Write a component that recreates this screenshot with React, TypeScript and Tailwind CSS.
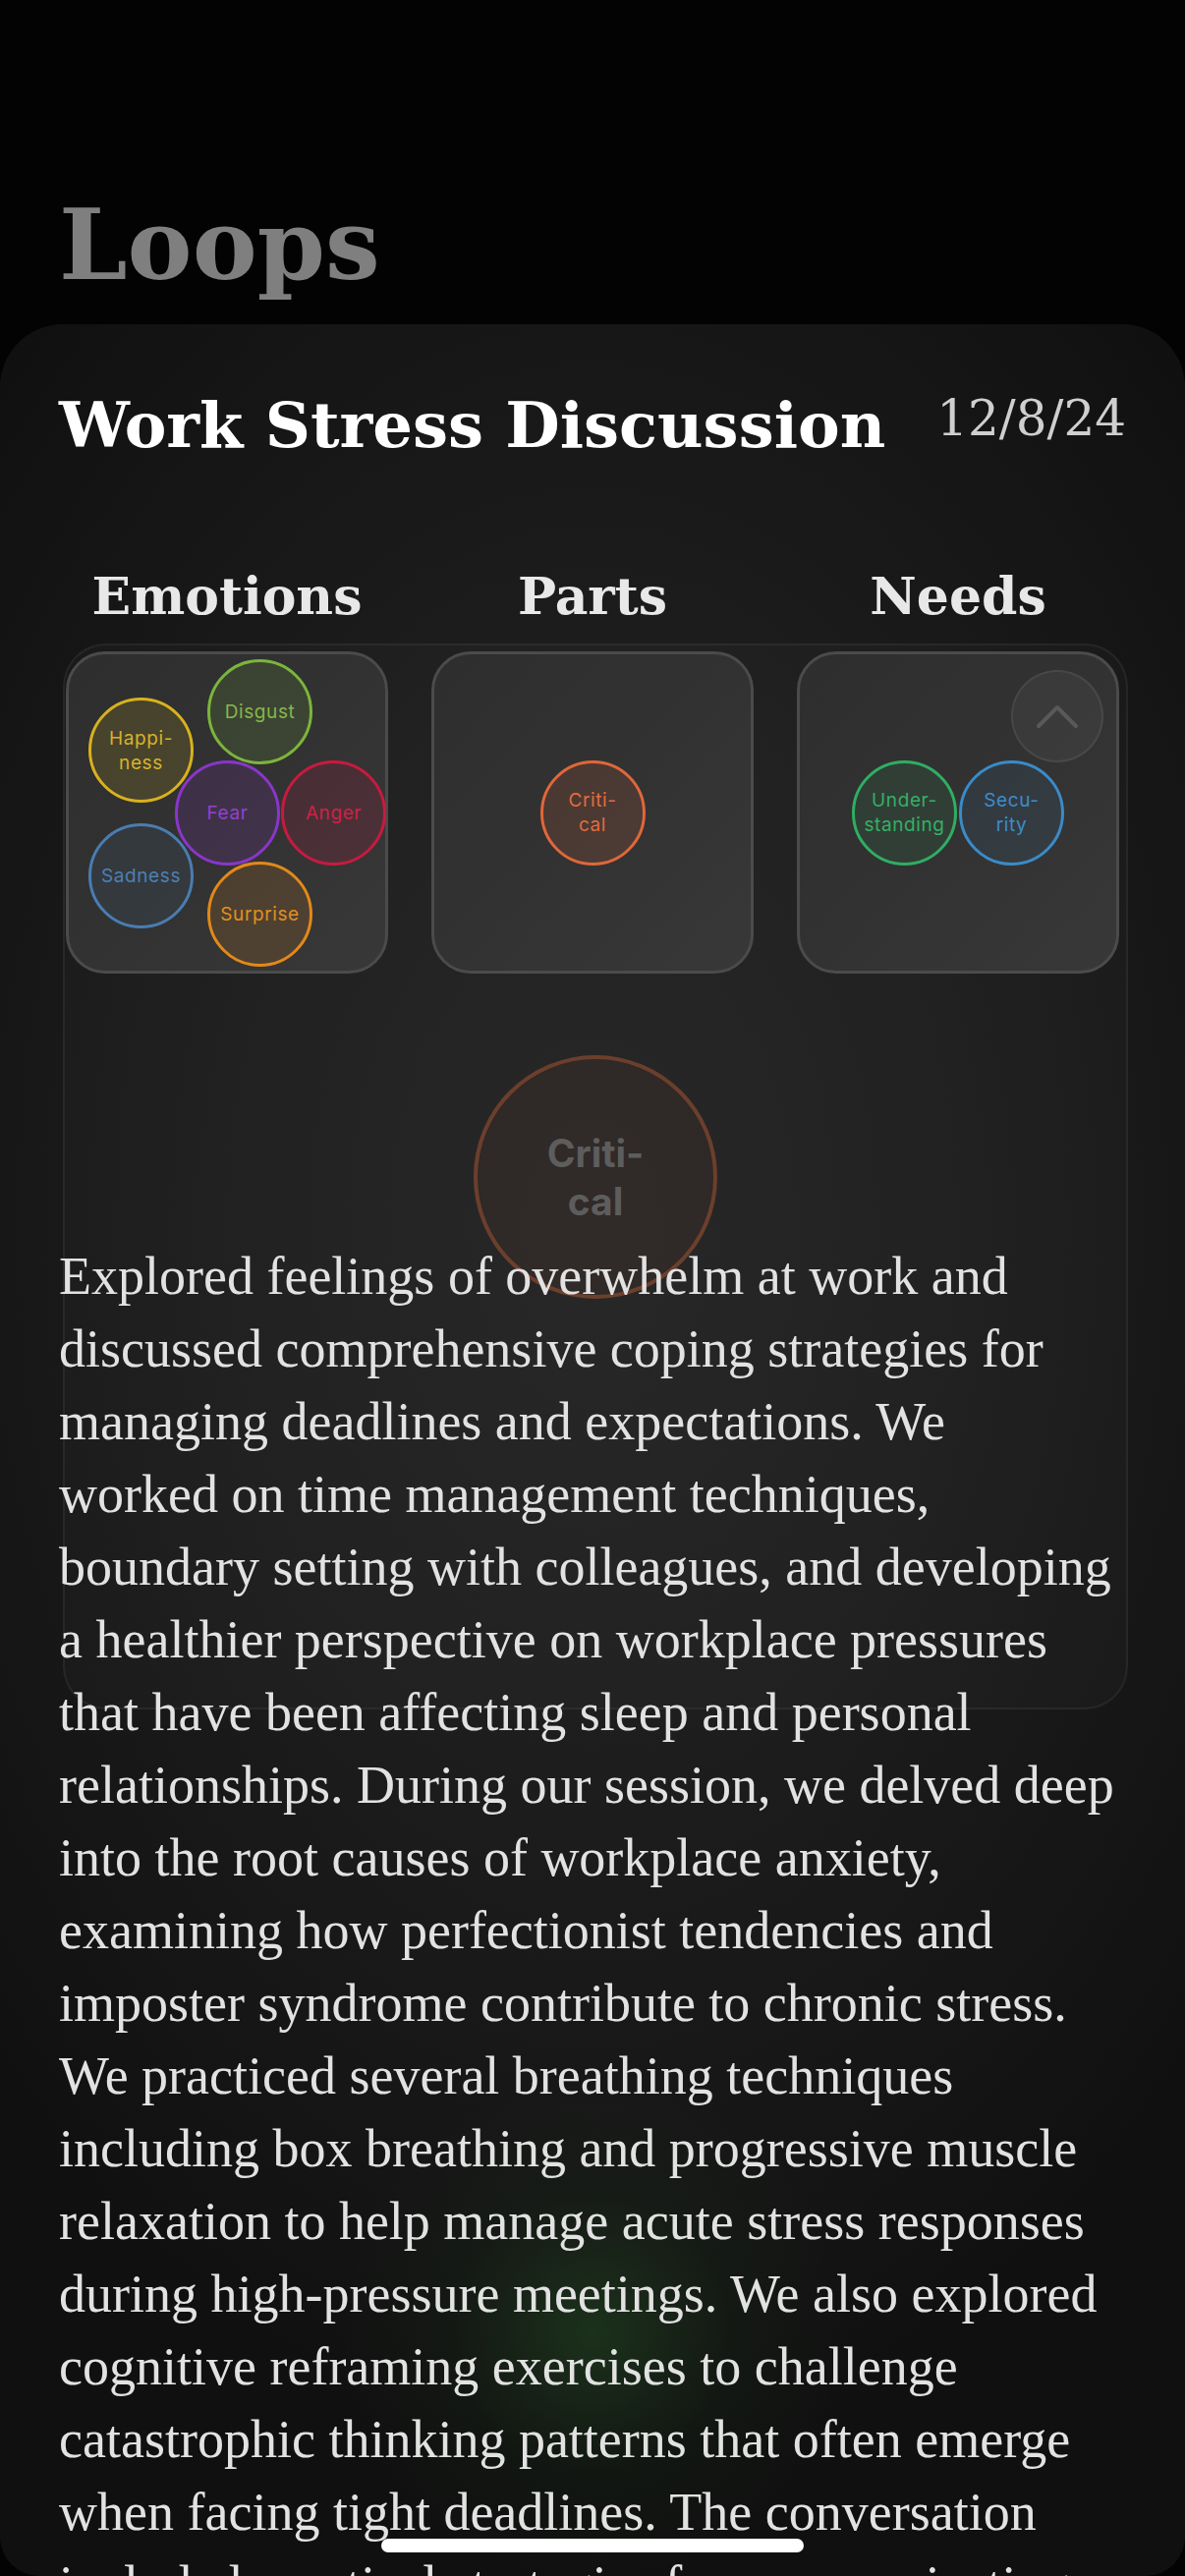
type Bubble = { lines: string[]; cls: string; x?: number; y?: number };

const emotions: Bubble[] = [
  { lines: ['Disgust'], x: 141, y: 5, cls: 'border-[#7cb53c] bg-[#7cb53c]/15 text-[#86b64a]' },
  { lines: ['Happi-', 'ness'], x: 20, y: 44, cls: 'border-[#d8b21e] bg-[#d8b21e]/15 text-[#d6b22a]' },
  { lines: ['Fear'], x: 108, y: 108, cls: 'border-[#8a36c9] bg-[#8a36c9]/15 text-[#9340d2]' },
  { lines: ['Anger'], x: 216, y: 108, cls: 'border-[#c81a40] bg-[#c81a40]/15 text-[#cc2248]' },
  { lines: ['Sadness'], x: 20, y: 172, cls: 'border-[#4a7db0] bg-[#4a7db0]/10 text-[#4c80b2]' },
  { lines: ['Surprise'], x: 141, y: 211, cls: 'border-[#e2891a] bg-[#e2891a]/15 text-[#e0901f]' },
];

const needs: Bubble[] = [
  { lines: ['Under-', 'standing'], cls: 'border-[#2fae62] bg-[#2fae62]/10 text-[#34b066]' },
  { lines: ['Secu-', 'rity'], cls: 'border-[#3a8bc9] bg-[#3a8bc9]/10 text-[#3d8ccb]' },
];

const summary = [
  'Explored feelings of overwhelm at work and',
  'discussed comprehensive coping strategies for',
  'managing deadlines and expectations. We',
  'worked on time management techniques,',
  'boundary setting with colleagues, and developing',
  'a healthier perspective on workplace pressures',
  'that have been affecting sleep and personal',
  'relationships. During our session, we delved deep',
  'into the root causes of workplace anxiety,',
  'examining how perfectionist tendencies and',
  'imposter syndrome contribute to chronic stress.',
  'We practiced several breathing techniques',
  'including box breathing and progressive muscle',
  'relaxation to help manage acute stress responses',
  'during high-pressure meetings. We also explored',
  'cognitive reframing exercises to challenge',
  'catastrophic thinking patterns that often emerge',
  'when facing tight deadlines. The conversation',
  'included practical strategies for communicating',
];

const Circle = ({ b, className = '' }: { b: Bubble; className?: string }) => (
  <div
    className={`flex h-[107px] w-[107px] shrink-0 flex-col items-center justify-center rounded-full border-[3px] text-center font-['Inter',sans-serif] text-[19px] leading-[25px] tracking-[0.6px] ${b.cls} ${className}`}
    style={b.x !== undefined ? { left: b.x, top: b.y } : undefined}
  >
    {b.lines.map((l) => (
      <span key={l}>{l}</span>
    ))}
  </div>
);

const Box = ({ children, className = '' }: { children?: React.ReactNode; className?: string }) => (
  <div
    className={`relative h-[328px] rounded-[40px] border-[3px] border-[#4b4b4b] bg-[linear-gradient(135deg,#2e2e2e_0%,#323232_50%,#383838_100%)] ${className}`}
  >
    {children}
  </div>
);

const App = () => {
  return (
    <div className="relative h-[2622px] w-[1206px] overflow-hidden bg-[#030303]">
      {/* Large title */}
      <div className="px-[60px] pt-[200px]">
        <h1 className="font-['DejaVu_Serif',serif] text-[99px] font-bold leading-none text-[#7f7f7f]">Loops</h1>
      </div>

      {/* Sheet */}
      <div className="absolute left-0 right-0 top-[330px] bottom-0 overflow-hidden rounded-t-[64px] rounded-b-[40px] bg-[radial-gradient(circle_at_50%_2045px,rgba(38,86,38,0.45)_0px,rgba(30,60,30,0.15)_140px,transparent_260px),radial-gradient(ellipse_70%_55%_at_50%_40%,#242424_0%,#1d1d1d_45%,#151515_80%,#101010_100%)]">
        {/* overlay panel (behind) */}
        <div className="absolute left-[64px] top-[325px] flex h-[1085px] w-[1084px] items-center justify-center rounded-[44px] border-2 border-white/[0.05] bg-white/[0.02]">
          <div className="flex h-[248px] w-[248px] flex-col items-center justify-center rounded-full border-4 border-[#e06a3a]/35 bg-[#e06a3a]/[0.05] font-['Inter',sans-serif] text-[39px] font-bold leading-[49px] text-[#5d5d5d]">
            <span>Criti-</span>
            <span>cal</span>
          </div>
        </div>

        <div className="relative">
          {/* Title row */}
          <div className="flex items-start justify-between px-[60px] pt-[71px]">
            <h2 className="font-['DejaVu_Serif',serif] text-[64px] font-bold leading-none text-white">Work Stress Discussion</h2>
            <span className="font-['DejaVu_Serif',serif] text-[50px] leading-none text-[#cfcfcf]">12/8/24</span>
          </div>

          {/* Columns */}
          <div className="mt-[116px] grid grid-cols-3 gap-x-[44px] px-[67px]">
            {['Emotions', 'Parts', 'Needs'].map((h) => (
              <h3 key={h} className="text-center font-['DejaVu_Serif',serif] text-[52px] font-bold leading-none text-[#e8e8e8]">
                {h}
              </h3>
            ))}
          </div>
          <div className="mt-[30px] grid grid-cols-3 gap-x-[44px] px-[67px]">
            <Box>
              {emotions.map((b) => (
                <Circle key={b.lines[0]} b={b} className="absolute" />
              ))}
            </Box>
            <Box className="flex items-center justify-center">
              <Circle b={{ lines: ['Criti-', 'cal'], cls: 'border-[#e0673a] bg-[#e0673a]/15 text-[#e26c3e]' }} />
            </Box>
            <Box className="flex items-center justify-center gap-[2px]">
              {needs.map((b) => (
                <Circle key={b.lines[0]} b={b} />
              ))}
            </Box>
          </div>

          {/* Summary */}
          <div className="mt-[271px] px-[60px] font-['Liberation_Serif',serif] text-[54px] leading-[74px] text-[#e2e2e2]">
            {summary.map((line) => (
              <p key={line} className="whitespace-nowrap">
                {line}
              </p>
            ))}
          </div>
        </div>

        {/* collapse button */}
        <div className="absolute left-[1029px] top-[352px] flex h-[94px] w-[94px] items-center justify-center rounded-full border-2 border-white/[0.07] bg-white/[0.04]">
          <svg width="44" height="26" viewBox="0 0 44 26" fill="none">
            <path d="M3 23 L22 4 L41 23" stroke="#595959" strokeWidth="4" strokeLinecap="round" strokeLinejoin="round" />
          </svg>
        </div>
      </div>

      {/* Home indicator */}
      <div className="absolute bottom-[24px] left-[388px] h-[14px] w-[430px] rounded-full bg-white" />
    </div>
  );
};

export default App;
